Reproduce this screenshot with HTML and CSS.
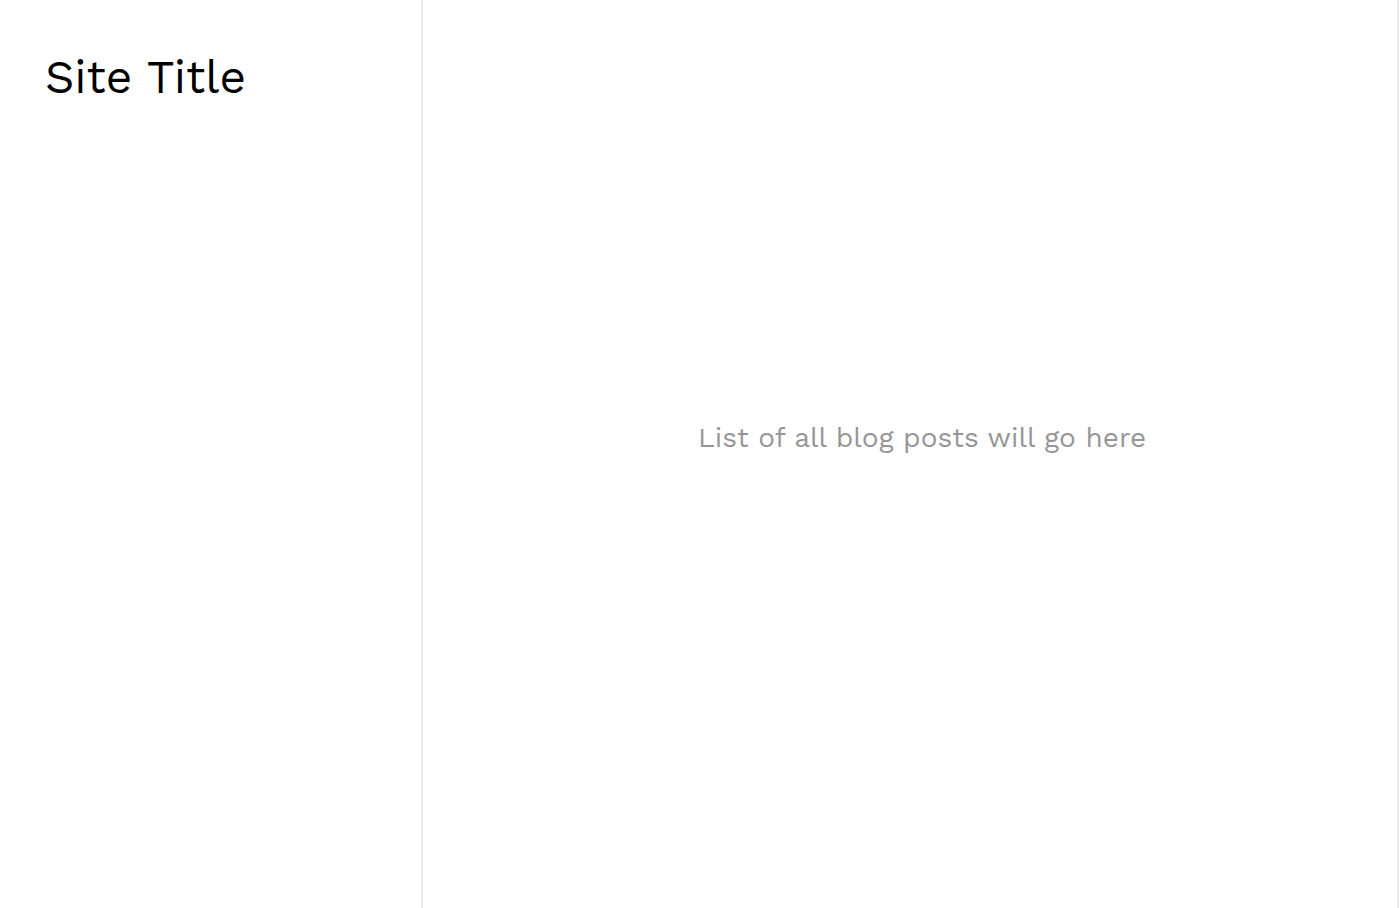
FILE: index.html
```html
<!DOCTYPE html>
<html lang="en">
<head>
  <meta charset="UTF-8">
  <title>Site Title</title>
  <meta name="viewport" content="width=device-width, initial-scale=1.0">
  <link rel="stylesheet" href="styles.css">
</head>
<body>
  <div class="layout">
    <header class="sidebar">
      <h1 class="site-title">Site Title</h1>
    </header>
    <main class="posts">
      <p class="placeholder">List of all blog posts will go here</p>
    </main>
  </div>
</body>
</html>
```

FILE: styles.css
```css
* {
  box-sizing: border-box;
}
body {
  margin: 0;
  font-family: "Work Sans", Inter, "Liberation Sans", sans-serif;
  background-color: #fff;
  color: #000;
}
.layout {
  display: grid;
  grid-template-columns: 423px 1fr;
  min-height: 100vh;
}
.sidebar {
  padding: 48px 45px;
  border-right: 2px solid #ebebeb;
}
.site-title {
  margin: 0;
  font-size: 46px;
  font-weight: 400;
  line-height: 58px;
}
.posts {
  display: flex;
  align-items: center;
  justify-content: center;
  margin-right: 1px;
  padding: 0 0 32px 24px;
  border-right: 2px solid #ebebeb;
}
.placeholder {
  margin: 0;
  font-size: 28px;
  font-weight: 400;
  line-height: 36px;
  color: #969696;
}
```
